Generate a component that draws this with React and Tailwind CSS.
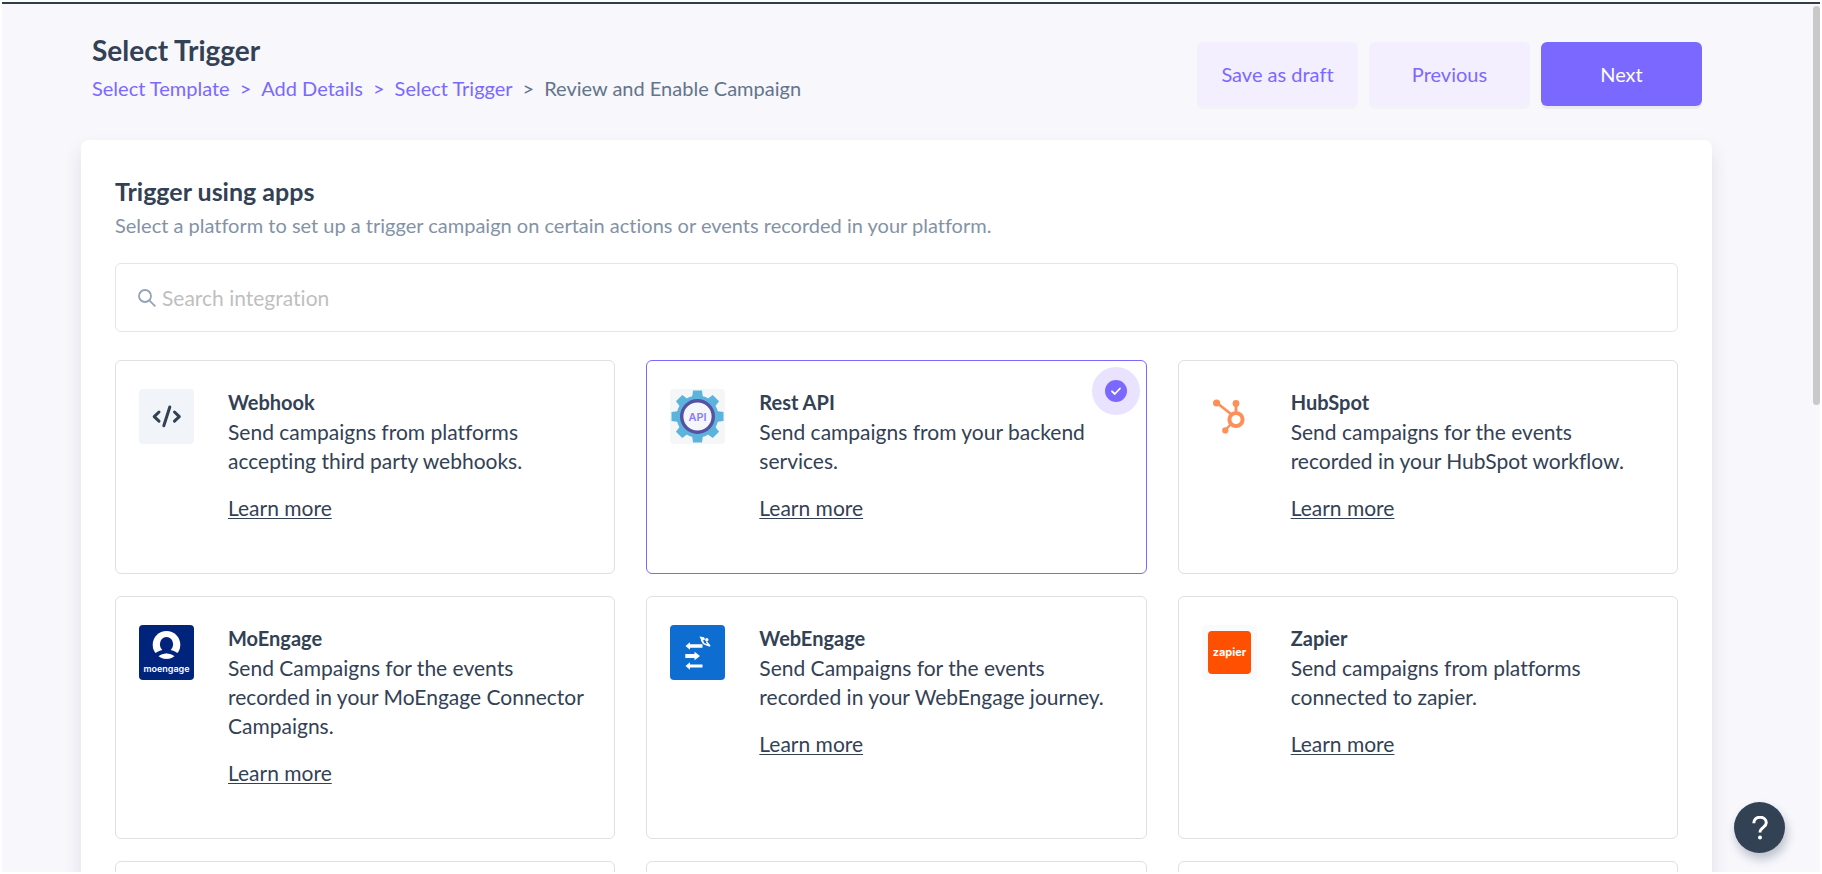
const steps = [
  { label: 'Select Template', done: true },
  { label: 'Add Details', done: true },
  { label: 'Select Trigger', done: true },
  { label: 'Review and Enable Campaign', done: false },
];

const platforms = [
  {
    name: 'Webhook',
    text: 'Send campaigns from platforms accepting third party webhooks.',
    logo: <WebhookLogo />,
  },
  {
    name: 'Rest API',
    text: 'Send campaigns from your backend services.',
    logo: <RestApiLogo />,
    selected: true,
  },
  {
    name: 'HubSpot',
    text: 'Send campaigns for the events recorded in your HubSpot workflow.',
    logo: <HubSpotLogo />,
  },
  {
    name: 'MoEngage',
    text: 'Send Campaigns for the events recorded in your MoEngage Connector Campaigns.',
    logo: <MoEngageLogo />,
  },
  {
    name: 'WebEngage',
    text: 'Send Campaigns for the events recorded in your WebEngage journey.',
    logo: <WebEngageLogo />,
  },
  {
    name: 'Zapier',
    text: 'Send campaigns from platforms connected to zapier.',
    logo: <ZapierLogo />,
  },
];

function WebhookLogo() {
  return (
    <svg viewBox="0 0 55 55" className="h-[55px] w-[55px]" aria-hidden="true">
      <rect width="55" height="55" rx="4" fill="#f1f4f9" />
      <g fill="none" stroke="#334155" strokeWidth="3" strokeLinecap="round" strokeLinejoin="round">
        <path d="M20 23l-4.800 4.600 4.800 4.600" />
        <path d="M35.500 23l4.800 4.600-4.800 4.600" />
        <path d="M30.800 18l-6 18.800" />
      </g>
    </svg>
  );
}

function RestApiLogo() {
  return (
    <svg viewBox="0 0 55 55" className="h-[55px] w-[55px]" aria-hidden="true">
      <rect width="55" height="55" rx="4" fill="#f5f6f8" />
      <g fill="#5cb3dc">
        <circle cx="27.5" cy="27.5" r="21" />
        {[0, 45, 90, 135, 180, 225, 270, 315].map((angle) => (
          <path key={angle} d="M22 9l1-7.500h9l1 7.500z" transform={`rotate(${angle} 27.5 27.5)`} />
        ))}
      </g>
      <circle cx="27.5" cy="27.5" r="15.8" fill="#f5f6fa" stroke="#5551a3" strokeWidth="3.4" />
      <text
        x="27.5"
        y="31.5"
        textAnchor="middle"
        fontFamily="Inter, sans-serif"
        fontWeight="600"
        fontSize="11"
        fill="#8b7cf6"
      >
        API
      </text>
    </svg>
  );
}

function HubSpotLogo() {
  return (
    <svg viewBox="0 0 55 55" className="h-[55px] w-[55px]" aria-hidden="true">
      <g stroke="#ff8f59" fill="none">
        <path d="M15 14l14 11" strokeWidth="2.8" />
        <path d="M34 14v10" strokeWidth="2.8" />
        <path d="M23.5 41l5-5.5" strokeWidth="2.4" />
        <circle cx="34" cy="30.5" r="6.6" strokeWidth="4" />
      </g>
      <g fill="#ff8f59">
        <circle cx="14.6" cy="14" r="3.6" />
        <circle cx="34" cy="14.4" r="3.4" />
        <circle cx="23.3" cy="41.4" r="3.1" />
      </g>
    </svg>
  );
}

function MoEngageLogo() {
  return (
    <svg viewBox="0 0 55 55" className="h-[55px] w-[55px]" aria-hidden="true">
      <rect width="55" height="55" rx="4" fill="#00237c" />
      <circle cx="27.5" cy="19.8" r="13.8" fill="#fff" />
      <path
        d="M27.5 12a6.6 7 0 0 1 6.6 7c0 2.6-1 4.6-2.4 6 3.4.9 6.4 2.6 8.3 4.4l-4 5-1-.4c-1.8-3.6-4.2-5.2-7.5-5.2s-5.7 1.6-7.5 5.2l-1 .4-4-5c1.9-1.8 4.9-3.5 8.300-4.400-1.400-1.400-2.400-3.400-2.400-6a6.600 7 0 0 1 6.600-7z"
        fill="#00237c"
      />
      <path d="M19.5 31.2c2.4-2 5-2.800 8-2.800s5.600.8 8 2.800c-2.200 1.700-5 2.600-8 2.600s-5.800-.9-8-2.600z" fill="#fff" />
      <text
        x="27.5"
        y="46.5"
        textAnchor="middle"
        fontFamily="Inter, sans-serif"
        fontWeight="600"
        fontSize="9"
        fill="#fff"
      >
        moengage
      </text>
    </svg>
  );
}

function WebEngageLogo() {
  return (
    <svg viewBox="0 0 55 55" className="h-[55px] w-[55px]" aria-hidden="true">
      <rect width="55" height="55" rx="4" fill="#0e6dd0" />
      <g fill="#fff">
        <path d="M15.5 21l4.500-3.800v2.100h12.500v3.400H20v2.100z" />
        <path d="M30 31l-5.500-4.200v2.300h-9.200v4h9.200v2.200z" />
        <path d="M15.5 41l4.500-3.800v2.300h12.500v3H20v2.300z" />
        <path d="M29.5 11.5l4.500.8 1.200 2.200-2 .5.800 3.200-1.600-.8z" />
      </g>
      <path d="M31.5 13.5c.2 3 1.500 5.500 4.500 6l4 1.500-3.600-4.200" fill="none" stroke="#fff" strokeWidth="1.4" />
      <circle cx="36.8" cy="14.8" r="1.7" fill="#fff" />
    </svg>
  );
}

function ZapierLogo() {
  return (
    <svg viewBox="0 0 55 55" className="h-[55px] w-[55px]" aria-hidden="true">
      <rect width="55" height="55" rx="4" fill="#f9fafc" />
      <rect x="6" y="6" width="43" height="43" rx="4" fill="#ff4f00" />
      <text
        x="27.5"
        y="31"
        textAnchor="middle"
        fontFamily="Inter, sans-serif"
        fontWeight="700"
        fontSize="11"
        fill="#fff"
      >
        zapier
      </text>
    </svg>
  );
}

function SelectedBadge() {
  return (
    <span className="absolute top-1.5 right-1.5 flex h-12 w-12 items-center justify-center rounded-full bg-[#e9e3ff]">
      <svg viewBox="0 0 22 22" className="h-[22px] w-[22px]" aria-hidden="true">
        <circle cx="11" cy="11" r="11" fill="#7b69ff" />
        <path
          d="M7 11.3l2.800 2.700 5.200-5.500"
          fill="none"
          stroke="#fff"
          strokeWidth="1.8"
          strokeLinecap="round"
          strokeLinejoin="round"
        />
      </svg>
    </span>
  );
}

function PlatformCard({ name, text, logo, selected = false }) {
  return (
    <article
      className={`relative flex gap-[34px] rounded-md border px-[23px] pt-7 pb-[51px] ${
        selected ? 'border-[#7b69ff]' : 'border-[#e0e0e0]'
      }`}
    >
      <div className="shrink-0">{logo}</div>
      <div className="min-w-0">
        <h3 className="mb-0.5 text-[20px] leading-[26px] font-bold">{name}</h3>
        <p className="text-[21px] leading-[29px]">{text}</p>
        <a
          href="#"
          className="mt-[18px] inline-block text-[21px] leading-[29px] underline decoration-1 underline-offset-2"
        >
          Learn more
        </a>
      </div>
      {selected && <SelectedBadge />}
    </article>
  );
}

function Header() {
  return (
    <header className="flex items-start justify-between pr-2.5 pl-[11px]">
      <div>
        <h1 className="text-[28px] leading-[38px] font-bold">Select Trigger</h1>
        <nav aria-label="Steps" className="mt-1 flex gap-2.5 text-[20px] leading-[30px]">
          {steps.map((step, i) => (
            <span key={step.label} className="flex gap-2.5">
              {i > 0 && <span className={step.done ? 'text-[#7b69ff]' : 'text-[#64748b]'}>&gt;</span>}
              {step.done ? (
                <a href="#" className="text-[#7b69ff]">
                  {step.label}
                </a>
              ) : (
                <span className="text-[#64748b]">{step.label}</span>
              )}
            </span>
          ))}
        </nav>
      </div>
      <div className="mt-[11px] flex gap-[11px] text-[20px]">
        <button
          type="button"
          className="h-16 w-[161px] rounded-md bg-[#f3efff] text-[#7b69ff] shadow-[0_3px_0_rgba(0,0,0,0.02)]"
        >
          Save as draft
        </button>
        <button
          type="button"
          className="h-16 w-[161px] rounded-md bg-[#f3efff] text-[#7b69ff] shadow-[0_3px_0_rgba(0,0,0,0.02)]"
        >
          Previous
        </button>
        <button
          type="button"
          className="h-16 w-[161px] rounded-md bg-[#7b69ff] text-white shadow-[0_3px_0_rgba(0,0,0,0.05)]"
        >
          Next
        </button>
      </div>
    </header>
  );
}

export default function App() {
  return (
    <div className="h-screen overflow-hidden bg-white p-0.5 font-[Lato,sans-serif] text-[#334155] [font-variant-ligatures:none]">
      <div className="relative h-full overflow-hidden border-t-2 border-[#2f3e4e] bg-[#f7f7fc] pt-[27px] pr-[108px] pl-[79px]">
        <Header />

        <main className="mt-[34px] rounded-lg bg-white px-[34px] pt-[33px] pb-12 shadow-[0_10px_18px_rgba(50,50,93,0.12)]">
          <h2 className="text-[25px] leading-9 font-bold">Trigger using apps</h2>
          <p className="text-[20px] leading-8 text-[#8492a6]">
            Select a platform to set up a trigger campaign on certain actions or events recorded in your platform.
          </p>

          {/* Search */}
          <label className="mt-[22px] flex h-[69px] items-center gap-1.5 rounded-md border border-[#e2e6ee] px-[22px]">
            <svg viewBox="0 0 18 18" className="h-[18px] w-[18px] shrink-0" aria-hidden="true">
              <g fill="none" stroke="#94a3b8" strokeWidth="1.8">
                <circle cx="7" cy="7" r="6" />
                <path d="M11.3 11.3l6 6" />
              </g>
            </svg>
            <input
              type="text"
              aria-label="Search integration"
              placeholder="Search integration"
              className="w-full bg-transparent text-[21px] leading-8 placeholder:text-[#bfbfbf] focus:outline-none"
            />
          </label>

          {/* Platforms */}
          <div className="mt-7 grid grid-cols-3 gap-x-[31px] gap-y-[22px]">
            {platforms.map((platform) => (
              <PlatformCard key={platform.name} {...platform} />
            ))}
            <article className="h-[214px] rounded-md border border-[#e0e0e0]" />
            <article className="h-[214px] rounded-md border border-[#e0e0e0]" />
            <article className="h-[214px] rounded-md border border-[#e0e0e0]" />
          </div>
        </main>

        {/* Scroll thumb */}
        <div className="absolute top-0.5 right-0 h-[46%] w-[7px] rounded-full bg-[#c9c9c9]" />
      </div>

      <button
        type="button"
        aria-label="Help"
        className="fixed right-[37px] bottom-[21px] flex h-[51px] w-[51px] items-center justify-center rounded-full bg-[#334155] shadow-[2px_6px_10px_rgba(51,65,85,0.3)]"
      >
        <svg viewBox="0 0 24 24" className="h-6 w-6" aria-hidden="true">
          <path
            d="M5.8 7.2c0-3.600 2.600-6 6.200-6s6.300 2.300 6.300 5.600c0 4.600-6.300 4.700-6.300 9.700"
            fill="none"
            stroke="#fff"
            strokeWidth="3"
          />
          <circle cx="12" cy="21.5" r="2" fill="#fff" />
        </svg>
      </button>
    </div>
  );
}
